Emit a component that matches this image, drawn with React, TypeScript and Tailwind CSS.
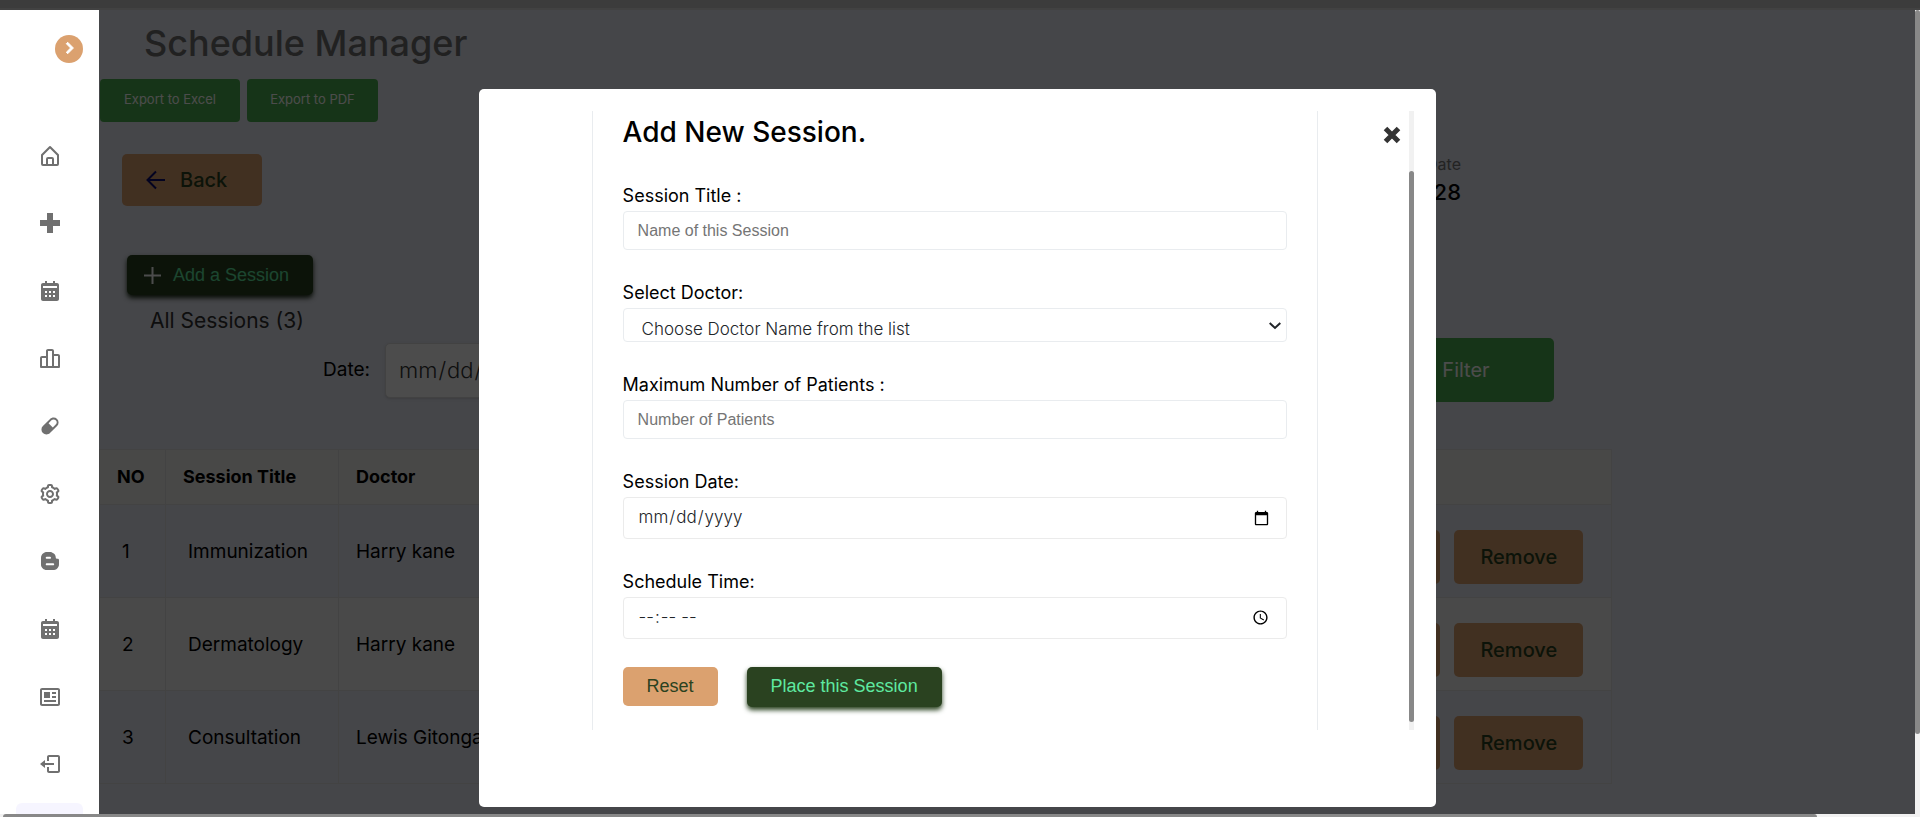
import React from "react";
import {
  BiBarChartAlt2,
  BiChevronRight,
  BiCog,
  BiHomeAlt,
  BiLogOut,
  BiLogoBlogger,
  BiNews,
  BiPlusMedical,
  BiSolidCalendar,
  BiSolidCapsule,
} from "react-icons/bi";

interface Session {
  id: number;
  title: string;
  doctor: string;
}

const sessions: Session[] = [
  { id: 1, title: "Immunization", doctor: "Harry kane" },
  { id: 2, title: "Dermatology", doctor: "Harry kane" },
  { id: 3, title: "Consultation", doctor: "Lewis Gitonga" },
];

const navItems = [
  { label: "Home", icon: BiHomeAlt },
  { label: "Doctors", icon: BiPlusMedical },
  { label: "Schedule", icon: BiSolidCalendar },
  { label: "Statistics", icon: BiBarChartAlt2 },
  { label: "Pharmacy", icon: BiSolidCapsule },
  { label: "Settings", icon: BiCog },
  { label: "Blog", icon: BiLogoBlogger },
  { label: "Appointments", icon: BiSolidCalendar },
  { label: "News", icon: BiNews },
  { label: "Log out", icon: BiLogOut },
];

const Sidebar: React.FC = () => {
  return (
    <aside className="relative z-20 flex w-[99px] shrink-0 flex-col overflow-hidden bg-white">
      <button
        aria-label="Expand menu"
        className="mt-[25px] mr-4 flex size-7 shrink-0 items-center justify-center self-end rounded-full bg-[#dba16f] pb-[2px] text-white"
      >
        <BiChevronRight className="size-6 stroke-current stroke-1" />
      </button>
      <nav className="mt-[59px] flex h-[676px] shrink-0 flex-col">
        {navItems.map(({ label, icon: Icon }, i) => (
          <a
            key={i}
            href="#"
            aria-label={label}
            className="flex flex-1 items-center justify-center text-[#707070]"
          >
            <Icon className="size-6" />
          </a>
        ))}
      </nav>
      <div className="mx-4 mt-[5px] h-12 shrink-0 rounded-md bg-[#f6f5ff]" />
    </aside>
  );
};

const SessionTable: React.FC = () => {
  return (
    <table className="mt-[47px] w-5/6 table-fixed border-collapse border border-[#e0e0e0] text-left">
      <thead>
        <tr className="h-[55px] border-b border-[#e0e0e0] bg-[#f0f0ef] text-lg font-bold">
          <th className="w-[66px] border-r border-[#e0e0e0] pl-[17px]">NO</th>
          <th className="w-[173px] border-r border-[#e0e0e0] pl-[17px]">
            Session Title
          </th>
          <th className="w-[240px] pl-[17px]">Doctor</th>
          <th />
        </tr>
      </thead>
      <tbody>
        {sessions.map((session) => (
          <tr
            key={session.id}
            className="h-[93px] border-b border-[#e0e0e0] text-[19px] even:bg-[#f5f5f4]"
          >
            <td className="border-r border-[#e0e0e0] pt-[2px] pl-[22px]">
              {session.id}
            </td>
            <td className="border-r border-[#e0e0e0] pt-[2px] pl-[22px]">
              {session.title}
            </td>
            <td className="pt-[2px] pl-[17px] whitespace-nowrap">
              {session.doctor}
            </td>
            <td className="pt-[11px] pr-7">
              <div className="flex justify-end gap-[14px] text-xl font-medium text-[#2a4220]">
                <button className="h-[54px] w-[129px] rounded-[5px] bg-[#dba16f]">
                  View
                </button>
                <button className="h-[54px] w-[129px] rounded-[5px] bg-[#dba16f]">
                  Remove
                </button>
              </div>
            </td>
          </tr>
        ))}
      </tbody>
    </table>
  );
};

const ScheduleManager: React.FC = () => {
  return (
    <main className="min-w-0 flex-1 overflow-hidden bg-[#e6e9f3]">
      <h1 className="mt-[6px] ml-[45px] text-4xl leading-[54px] font-medium text-[#707070]">
        Schedule Manager
      </h1>
      <div className="mt-[9px] ml-px flex gap-[7px] text-[13px] text-white">
        <button className="h-[43px] w-[140px] rounded-[4px] bg-[#4caf50] pb-[2px]">
          Export to Excel
        </button>
        <button className="h-[43px] w-[131px] rounded-[4px] bg-[#4caf50] pb-[2px]">
          Export to PDF
        </button>
      </div>
      <div className="mt-8 flex h-[52px] w-3/4 items-center justify-between pl-[23px]">
        <a
          href="#"
          className="flex h-full w-[140px] items-center rounded-[5px] bg-[#dba16f] pl-6 text-xl font-medium text-[#2a4220]"
        >
          <svg
            viewBox="0 0 20 20"
            fill="none"
            stroke="#0b0b6b"
            strokeWidth="2"
            className="mr-[14px] size-5"
          >
            <path d="M19 10H2M10 1.5 1.5 10l8.500 8.500" />
          </svg>
          Back
        </a>
        <div className="text-right">
          <p className="text-base text-[#777777]">Today's Date</p>
          <p className="text-[22px] leading-8 font-medium">2024-05-28</p>
        </div>
      </div>
      <button className="mt-[49px] ml-7 flex h-10 w-[186px] items-center rounded-[5px] bg-[#2a4220] pl-[17px] font-['Liberation_Sans',sans-serif] text-lg text-[#5ee9a0] shadow-[0_3px_5px_#1a2a14]">
        <svg
          viewBox="0 0 17 17"
          stroke="#ffffff"
          strokeWidth="2"
          className="mr-3 size-[17px]"
        >
          <path d="M8.500 0v17M0 8.500h17" />
        </svg>
        Add a Session
      </button>
      <p className="mt-[11px] ml-[51px] text-[21px] leading-[30px] text-[#313131]">
        All Sessions (3)
      </p>
      <div className="mt-[2px] flex h-16 w-[1455px] max-w-full items-center justify-between pl-[224px]">
        <div className="flex items-center gap-[15px] text-[19px]">
          <label htmlFor="filter-date">Date:</label>
          <input
            id="filter-date"
            type="date"
            className="h-[55px] w-[480px] rounded-[5px] border border-[#dddddd] bg-white px-3 text-[22px] font-light text-[#333333] shadow"
          />
        </div>
        <button className="h-full w-[176px] rounded-[5px] bg-[#4caf50] text-xl text-white">
          Filter
        </button>
      </div>
      <SessionTable />
    </main>
  );
};

interface FieldProps {
  id: string;
  label: string;
  children: React.ReactNode;
}

const Field: React.FC<FieldProps> = ({ id, label, children }) => {
  return (
    <div className="mb-7 flex flex-col gap-px">
      <label htmlFor={id} className="text-lg leading-[29px]">
        {label}
      </label>
      {children}
    </div>
  );
};

const AddSessionModal: React.FC = () => {
  return (
    <div className="absolute inset-0 z-10 flex justify-center bg-black/70 pt-[79px] pb-[7px]">
      <div
        role="dialog"
        aria-label="Add New Session"
        className="flex w-1/2 rounded-[5px] bg-white px-[22px] pt-[22px] pb-[77px]"
      >
        <div className="flex flex-1">
          <div className="flex-1" />
          <form className="w-4/5 border-x border-[#e9ecef] px-[30px]">
            <h2 className="mb-7 text-[28px] leading-[42px] font-medium">
              Add New Session.
            </h2>
            <Field id="title" label="Session Title :">
              <input
                id="title"
                type="text"
                placeholder="Name of this Session"
                className="h-[39px] rounded-[4px] border border-[#e9ecef] px-[14px] font-['Liberation_Sans',sans-serif] text-base placeholder:text-[#757575]"
              />
            </Field>
            <Field id="doctor" label="Select Doctor:">
              <div className="relative flex">
                <select
                  id="doctor"
                  className="h-[34px] w-full appearance-none rounded-[4px] border border-[#e9ecef] bg-white px-[18px] pt-2 text-[17px] font-light text-[#212529]"
                >
                  <option>Choose Doctor Name from the list</option>
                </select>
                <svg
                  viewBox="0 0 12 8"
                  fill="none"
                  stroke="#212529"
                  strokeWidth="2"
                  className="pointer-events-none absolute top-[14px] right-[6px] h-2 w-3"
                >
                  <path d="m.700 1 5.300 5 5.300-5" />
                </svg>
              </div>
            </Field>
            <Field id="patients" label="Maximum Number of Patients :">
              <input
                id="patients"
                type="number"
                placeholder="Number of Patients"
                className="h-[39px] rounded-[4px] border border-[#e9ecef] px-[14px] font-['Liberation_Sans',sans-serif] text-base placeholder:text-[#757575]"
              />
            </Field>
            <Field id="date" label="Session Date:">
              <input
                id="date"
                type="date"
                className="h-[42px] rounded-[4px] border border-[#ebebeb] px-[14px] text-[17px] font-light text-[#212529]"
              />
            </Field>
            <Field id="time" label="Schedule Time:">
              <input
                id="time"
                type="time"
                className="h-[42px] rounded-[4px] border border-[#ebebeb] px-[14px] text-[17px] font-light text-[#212529]"
              />
            </Field>
            <div className="flex items-start gap-[29px] font-['Liberation_Sans',sans-serif] text-lg">
              <button
                type="reset"
                className="h-[39px] w-[95px] rounded-[5px] bg-[#dba16f] pb-[2px] text-[#2a4220]"
              >
                Reset
              </button>
              <button
                type="submit"
                className="h-10 w-[195px] rounded-[5px] bg-[#2a4220] pb-[2px] text-[#5ee9a0] shadow-[0_3px_5px_#2a4220]"
              >
                Place this Session
              </button>
            </div>
          </form>
          <div className="flex flex-1 items-start justify-end">
            <button
              type="button"
              aria-label="Close"
              className="mt-[15px] mr-2 text-[#333333]"
            >
              <svg viewBox="0 0 18 18" className="size-[18px]">
                <path
                  d="M2.500 2.500l13 13M15.500 2.500l-13 13"
                  stroke="currentColor"
                  strokeWidth="5"
                />
              </svg>
            </button>
          </div>
        </div>
        <div className="w-[5px] bg-[#f1f1f1] pt-[60px] pb-2">
          <div className="h-full rounded-[3px] bg-[#888888]" />
        </div>
      </div>
    </div>
  );
};

export default function App() {
  return (
    <div className="flex h-screen flex-col overflow-hidden bg-[#f1f1f1] font-[Inter,sans-serif] text-black">
      <div className="h-[10px] shrink-0 border-b-2 border-[#424242] bg-[#3c3c3c]" />
      <div className="flex min-h-0 flex-1">
        <div className="relative flex min-w-0 flex-1">
          <Sidebar />
          <ScheduleManager />
          <AddSessionModal />
        </div>
        <div className="w-[5px] shrink-0">
          <div className="h-9/10 rounded-[3px] bg-[#888888]" />
        </div>
      </div>
      <div className="h-[3px] shrink-0">
        <div className="ml-[3px] h-full w-[1814px] max-w-full rounded-t-[3px] bg-[#888888]" />
      </div>
    </div>
  );
}
